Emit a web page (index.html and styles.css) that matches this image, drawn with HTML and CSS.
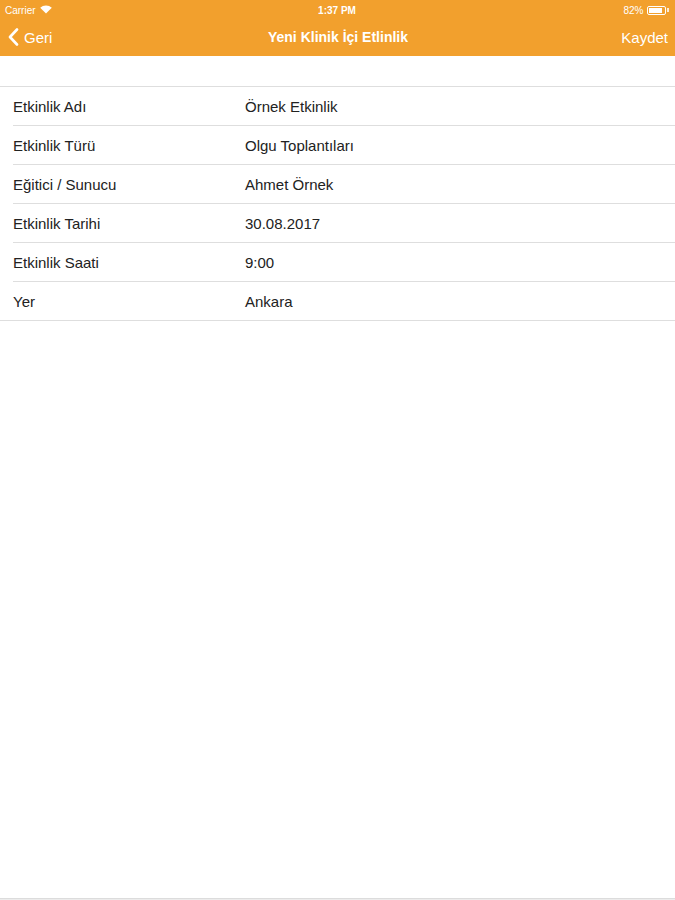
FILE: index.html
```html
<!DOCTYPE html>
<html lang="tr">
<head>
<meta charset="utf-8">
<title>Yeni Klinik İçi Etlinlik</title>
<link rel="stylesheet" href="styles.css">
</head>
<body>
<div class="screen">
  <header class="topbar">
    <div class="status">
      <div class="status-left">Carrier
        <svg class="wifi" width="12" height="9" viewBox="0 0 12 9"><path d="M6 8.6 L0.2 2.8 A8.2 8.2 0 0 1 11.8 2.8 Z" fill="#fff"/></svg>
      </div>
      <div class="status-time">1:37 PM</div>
      <div class="status-right">82%
        <span class="battery"><span class="battery-fill"></span></span><span class="battery-tip"></span>
      </div>
    </div>
    <nav class="navbar">
      <div class="nav-left">
        <svg class="chev" width="11" height="18" viewBox="0 0 11 18"><path d="M9 1.5 L2 9 L9 16.5" fill="none" stroke="#fff" stroke-width="2.6" stroke-linecap="round" stroke-linejoin="round"/></svg>
        <span>Geri</span>
      </div>
      <div class="nav-title">Yeni Klinik İçi Etlinlik</div>
      <div class="nav-right">Kaydet</div>
    </nav>
  </header>
  <main class="content">
    <div class="spacer"></div>
    <ul class="table">
      <li class="row"><span class="label">Etkinlik Adı</span><span class="value">Örnek Etkinlik</span></li>
      <li class="row"><span class="label">Etkinlik Türü</span><span class="value">Olgu Toplantıları</span></li>
      <li class="row"><span class="label">Eğitici / Sunucu</span><span class="value">Ahmet Örnek</span></li>
      <li class="row"><span class="label">Etkinlik Tarihi</span><span class="value">30.08.2017</span></li>
      <li class="row"><span class="label">Etkinlik Saati</span><span class="value">9:00</span></li>
      <li class="row"><span class="label">Yer</span><span class="value">Ankara</span></li>
    </ul>
  </main>
  <footer class="bottom"></footer>
</div>
</body>
</html>
```
FILE: styles.css
```css
* { box-sizing: border-box; }
html, body { margin: 0; padding: 0; }
body {
  font-family: "Liberation Sans", Arial, sans-serif;
  background: #fff;
  color: #222;
}
.screen {
  width: 675px;
  height: 900px;
  display: flex;
  flex-direction: column;
}
.topbar {
  background: #f2a02d;
  color: #fff;
  height: 56px;
  flex: none;
}
.status {
  height: 20px;
  display: flex;
  align-items: center;
  justify-content: space-between;
  padding: 0 6px 0 5px;
  font-size: 10px;
}
.status-left { display: flex; align-items: center; gap: 4px; width: 100px; }
.wifi { margin-top: -1px; }
.status-time {
  font-weight: bold;
  font-size: 10px;
}
.status-right {
  width: 100px;
  display: flex;
  align-items: center;
  justify-content: flex-end;
  gap: 4px;
}
.battery {
  width: 19px;
  height: 9px;
  border: 1px solid #fff;
  border-radius: 2px;
  padding: 1px;
  display: flex;
}
.battery-fill { background: #fff; width: 82%; height: 100%; }
.battery-tip {
  width: 1.5px;
  height: 4px;
  background: #fff;
  margin-left: -3px;
  opacity: 0.8;
}
.navbar {
  height: 34px;
  display: flex;
  align-items: center;
  justify-content: space-between;
  padding: 0 7px 0 8px;
  font-size: 15px;
}
.nav-left {
  width: 120px;
  display: flex;
  align-items: center;
  gap: 5px;
}
.nav-title {
  font-weight: bold;
  font-size: 14px;
}
.nav-right {
  width: 120px;
  text-align: right;
}
.content { flex: 1; }
.spacer { height: 31px; border-bottom: 1px solid #dedede; }
.table {
  list-style: none;
  margin: 0;
  padding: 0;
}
.row {
  height: 39px;
  display: flex;
  align-items: center;
  margin-left: 13px;
  border-bottom: 1px solid #dedede;
  font-size: 15px;
  color: #222;
}
.row:last-child {
  margin-left: 0;
  padding-left: 13px;
}
.label { width: 232px; }
.bottom {
  height: 2px;
  border-top: 1px solid #dcdcdc;
  background: #ececec;
  flex: none;
}
```
